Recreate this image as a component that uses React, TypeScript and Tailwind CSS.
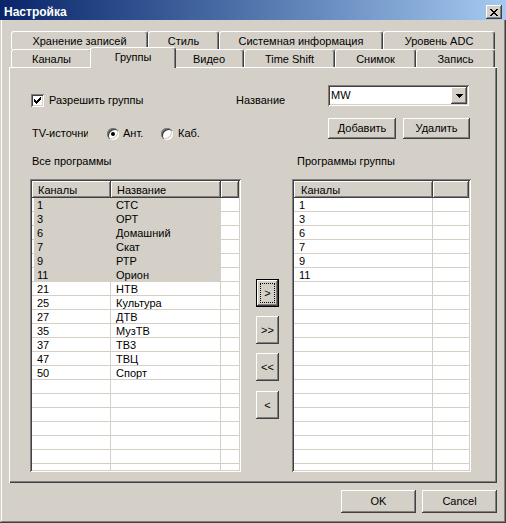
import React from "react";

const RAISED =
  "shadow-[inset_-1px_-1px_#404040,inset_1px_1px_#ffffff,inset_-2px_-2px_#808080,inset_2px_2px_#d4d0c8]";
const SUNKEN =
  "shadow-[inset_1px_1px_#808080,inset_-1px_-1px_#ffffff,inset_2px_2px_#404040,inset_-2px_-2px_#d4d0c8]";
const HEADER =
  "shadow-[inset_-1px_-1px_#404040,inset_1px_1px_#ffffff,inset_-2px_-2px_#808080]";
const TAB =
  "bg-[#d4d0c8] flex items-center justify-center whitespace-nowrap border-t border-l border-white border-r border-r-[#404040] rounded-t-[3px] shadow-[inset_-1px_0_#808080]";

function Button({
  children,
  className = "",
  focused = false,
}: {
  children: React.ReactNode;
  className?: string;
  focused?: boolean;
}) {
  return (
    <div
      className={`relative flex items-center justify-center bg-[#d4d0c8] ${
        focused ? "border border-black" : ""
      } ${RAISED} ${className}`}
    >
      {focused && (
        <div className="absolute inset-[3px] border border-dotted border-black" />
      )}
      <span className="leading-[13px]">{children}</span>
    </div>
  );
}

function Radio({ checked }: { checked?: boolean }) {
  return (
    <div className="w-[12px] h-[12px] rounded-full bg-white shadow-[inset_1px_1px_#808080,inset_2px_2px_#404040,inset_-1px_-1px_#ffffff,inset_-2px_-2px_#d4d0c8] flex items-center justify-center">
      {checked && <div className="w-[4px] h-[4px] rounded-full bg-black" />}
    </div>
  );
}

const leftRows: [string, string][] = [
  ["1", "СТС"],
  ["3", "ОРТ"],
  ["6", "Домашний"],
  ["7", "Скат"],
  ["9", "РТР"],
  ["11", "Орион"],
  ["21", "НТВ"],
  ["25", "Культура"],
  ["27", "ДТВ"],
  ["35", "МузТВ"],
  ["37", "ТВ3"],
  ["47", "ТВЦ"],
  ["50", "Спорт"],
];
const rightRows = ["1", "3", "6", "7", "9", "11"];

function LeftList() {
  const all = Array.from({ length: 20 }, (_, i) => leftRows[i] ?? ["", ""]);
  return (
    <div className={`w-[211px] h-[293px] bg-white p-[2px] ${SUNKEN}`}>
      <div className="w-full h-full overflow-hidden">
        <div className="flex h-[17px]">
          <div className={`w-[79px] h-full bg-[#d4d0c8] pl-[6px] pt-[1px] flex items-center ${HEADER}`}>
            Каналы
          </div>
          <div className={`w-[110px] h-full bg-[#d4d0c8] pl-[6px] pt-[1px] flex items-center ${HEADER}`}>
            Название
          </div>
          <div className={`w-[18px] h-full bg-[#d4d0c8] ${HEADER}`} />
        </div>
        {all.map(([a, b], i) => {
          const sel = i < 6;
          return (
            <div key={i} className="flex h-[14px]">
              <div className="w-[79px] h-full pl-[2px] border-b border-r border-[#d4d0c8]">
                <div className={`h-full pl-[3px] pt-[1px] leading-[12px] ${sel ? "bg-[#d4d0c8]" : ""}`}>
                  {a}
                </div>
              </div>
              <div
                className={`w-[110px] h-full pl-[5px] pt-[1px] leading-[12px] border-b border-r border-[#d4d0c8] ${
                  sel ? "bg-[#d4d0c8]" : ""
                }`}
              >
                {b}
              </div>
              <div className="w-[18px] h-full border-b border-[#d4d0c8]" />
            </div>
          );
        })}
      </div>
    </div>
  );
}

function RightList() {
  const all = Array.from({ length: 20 }, (_, i) => rightRows[i] ?? "");
  return (
    <div className={`w-[179px] h-[293px] bg-white p-[2px] ${SUNKEN}`}>
      <div className="w-full h-full overflow-hidden">
        <div className="flex h-[17px]">
          <div className={`w-[139px] h-full bg-[#d4d0c8] pl-[7px] pt-[1px] flex items-center ${HEADER}`}>
            Каналы
          </div>
          <div className={`w-[36px] h-full bg-[#d4d0c8] ${HEADER}`} />
        </div>
        {all.map((a, i) => (
          <div key={i} className="flex h-[14px]">
            <div className="w-[139px] h-full pl-[5px] pt-[1px] leading-[12px] border-b border-r border-[#d4d0c8]">
              {a}
            </div>
            <div className="w-[36px] h-full border-b border-[#d4d0c8]" />
          </div>
        ))}
      </div>
    </div>
  );
}

export default function App() {
  return (
    <div
      className={`w-[506px] h-[523px] overflow-hidden bg-[#d4d0c8] flex flex-col font-['Liberation_Sans',Arial,sans-serif] text-[11px] leading-[13px] text-black select-none shadow-[inset_-1px_-1px_#404040,inset_1px_1px_#d4d0c8,inset_-2px_-2px_#808080,inset_2px_2px_#ffffff]`}
    >
      {/* Title bar */}
      <div className="h-[20px] w-full bg-linear-to-r from-[#0a246a] to-[#a6caf0] flex items-center pt-[4px] pl-[4px] pr-[4px]">
        <div className="flex-1 text-white font-bold text-[12px] leading-[14px]">Настройка</div>
        <div className={`w-[16px] h-[14px] bg-[#d4d0c8] flex items-center justify-center ${RAISED}`}>
          <svg width="8" height="7" viewBox="0 0 8 7" shapeRendering="crispEdges">
            <path
              d="M0 0h2v1h-2z M6 0h2v1h-2z M1 1h2v1h-2z M5 1h2v1h-2z M2 2h4v1h-4z M3 3h2v1h-2z M2 4h4v1h-4z M1 5h2v1h-2z M5 5h2v1h-2z M0 6h2v1h-2z M6 6h2v1h-2z"
              fill="#000"
            />
          </svg>
        </div>
      </div>

      {/* Body */}
      <div className="pl-[9px] pt-[11px] flex flex-col">
        {/* Upper tab row */}
        <div className="flex pl-[2px] h-[18px]">
          <div className={`${TAB} w-[137px] h-[18px] pt-[2px]`}>Хранение записей</div>
          <div className={`${TAB} w-[71px] h-[18px] pt-[2px]`}>Стиль</div>
          <div className={`${TAB} w-[164px] h-[18px] pt-[2px]`}>Системная информация</div>
          <div className={`${TAB} w-[112px] h-[18px] pt-[2px]`}>Уровень ADC</div>
        </div>
        {/* Lower tab row */}
        <div className="flex items-end pl-[2px] h-[18px]">
          <div className={`${TAB} w-[81px] h-[18px] pt-[2px]`}>Каналы</div>
          <div className={`${TAB} relative z-10 w-[86px] -mx-[2px] h-[21px] -mb-[1px] pb-[1px]`}>
            Группы
          </div>
          <div className={`${TAB} w-[70px] h-[18px] pt-[2px]`}>Видео</div>
          <div className={`${TAB} w-[91px] h-[18px] pt-[2px]`}>Time Shift</div>
          <div className={`${TAB} w-[81px] h-[18px] pt-[2px]`}>Снимок</div>
          <div className={`${TAB} w-[79px] h-[18px] pt-[2px]`}>Запись</div>
        </div>

        {/* Panel */}
        <div className="w-[488px] h-[416px] shadow-[inset_1px_1px_#ffffff,inset_-1px_-1px_#404040,inset_-2px_-2px_#808080] flex flex-col pl-[21px] pt-[18px]">
          {/* Row A */}
          <div className="flex items-start h-[21px]">
            <div className="w-[206px] mt-[9px] flex items-center h-[13px]">
              <div className={`ml-[1px] w-[13px] h-[13px] bg-white flex items-center justify-center ${SUNKEN}`}>
                <svg width="7" height="7" viewBox="0 0 7 7" shapeRendering="crispEdges">
                  <path
                    d="M0 2H1V3H2V4H3V3H4V2H5V1H6V0H7V3H6V4H5V5H4V6H3V7H2V6H1V5H0Z"
                    fill="#000"
                  />
                </svg>
              </div>
              <span className="ml-[5px] whitespace-nowrap">Разрешить группы</span>
            </div>
            <div className="w-[92px] mt-[9px] h-[13px] whitespace-nowrap">Название</div>
            <div className={`w-[141px] h-[21px] bg-white p-[2px] flex ${SUNKEN}`}>
              <div className="flex-1 pl-[1px] leading-[17px]">MW</div>
              <div className={`w-[16px] h-[17px] bg-[#d4d0c8] flex items-center justify-center ${RAISED}`}>
                <svg width="7" height="4" viewBox="0 0 7 4" shapeRendering="crispEdges">
                  <path
                    d="M0 0h7v1h-1v1h-1v1h-1v1h-1v-1h-1v-1h-1v-1h-1z"
                    fill="#000"
                  />
                </svg>
              </div>
            </div>
          </div>

          {/* Row B */}
          <div className="flex items-start h-[21px] mt-[12px]">
            <div className="w-[298px] mt-[9px] h-[13px] flex items-center">
              <div className="ml-[2px] w-[56px] overflow-hidden whitespace-nowrap">TV-источник</div>
              <div className="ml-[19px] w-[54px] flex items-center">
                <Radio checked />
                <span className="ml-[4px]">Ант.</span>
              </div>
              <div className="flex items-center">
                <Radio />
                <span className="ml-[5px]">Каб.</span>
              </div>
            </div>
            <Button className="w-[68px] h-[21px]">Добавить</Button>
            <Button className="ml-[7px] w-[67px] h-[21px]">Удалить</Button>
          </div>

          {/* Row C */}
          <div className="flex h-[13px] mt-[16px]">
            <div className="w-[267px] pl-[2px]">Все программы</div>
            <div>Программы группы</div>
          </div>

          {/* Row D */}
          <div className="flex items-start mt-[11px]">
            <LeftList />
            <div className="w-[51px] pl-[15px] pt-[100px] flex flex-col gap-[9px]">
              <Button focused className="w-[23px] h-[28px]">
                &gt;
              </Button>
              <Button className="w-[23px] h-[28px]">&gt;&gt;</Button>
              <Button className="w-[23px] h-[28px]">&lt;&lt;</Button>
              <Button className="w-[23px] h-[28px] mt-[1px]">&lt;</Button>
            </div>
            <RightList />
          </div>
        </div>

        {/* Bottom buttons */}
        <div className="w-[488px] flex justify-end gap-[6px] mt-[7px]">
          <Button className="w-[75px] h-[23px]">OK</Button>
          <Button className="w-[75px] h-[23px]">Cancel</Button>
        </div>
      </div>
    </div>
  );
}
